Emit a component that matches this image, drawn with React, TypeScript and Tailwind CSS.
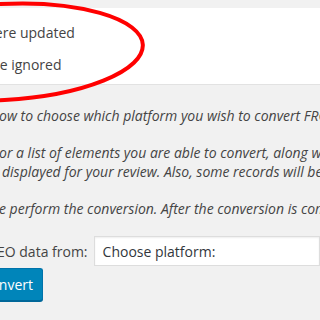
export default function App() {
  return (
    <div
      className="relative h-[320px] w-[320px] overflow-hidden bg-[#f1f1f1] text-[#444]"
      style={{ fontFamily: '"Open Sans", "Noto Sans", sans-serif' }}
    >
      <div className="pt-2">
        <div className="h-[77px] border-b border-[#e2e2e2] bg-white pt-[15px] text-[14px] leading-[20px] whitespace-nowrap">
          <p className="-ml-[16px]">were updated</p>
          <p className="mt-[12px] -ml-[6px]">re ignored</p>
        </div>
      </div>

      <div className="mt-[21px] text-[14px] italic leading-[19px] whitespace-nowrap">
        <p className="-ml-[1px]">ow to choose which platform you wish to convert FROM</p>
        <p className="mt-[18px] -ml-[1px]">or a list of elements you are able to convert, along with</p>
        <p className="ml-[2px]">displayed for your review. Also, some records will be</p>
        <p className="mt-[18px] -ml-[1px]">e perform the conversion. After the conversion is complete</p>
      </div>

      <div className="mt-[18px] flex items-center gap-[6px] whitespace-nowrap text-[14px]">
        <span className="-ml-[3px]">EO data from:</span>
        <div className="flex h-[30px] w-[240px] items-center border border-[#ddd] bg-white pl-[8px] text-[#32373c] shadow-[inset_0_1px_2px_rgba(0,0,0,0.07)]">
          Choose platform:
        </div>
      </div>

      <div className="mt-[2px] flex">
        <button className="-ml-[4px] flex h-[33px] w-[47px] items-center justify-end rounded-[3px] border border-[#0073aa] border-b-[#006799] bg-[#0085ba] pr-[9px] text-[14px] text-white shadow-[0_1px_0_#006799]">
          nvert
        </button>
      </div>

      <svg className="pointer-events-none absolute left-0 top-0" width="320" height="320">
        <ellipse cx="2" cy="52" rx="141" ry="48" fill="none" stroke="#f00" strokeWidth="4" transform="rotate(-3 2 52)" />
      </svg>
    </div>
  );
}
